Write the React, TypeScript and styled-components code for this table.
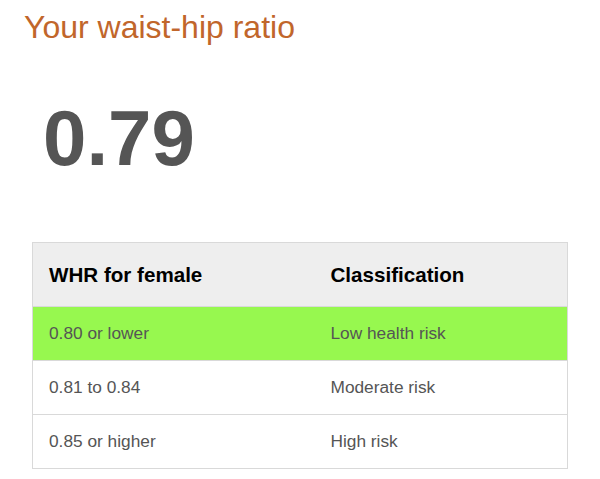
import React from 'react';
import styled, { createGlobalStyle } from 'styled-components';

const GlobalStyle = createGlobalStyle`
  body {
    margin: 0;
    background: #fff;
    font-family: 'Liberation Sans', Arial, sans-serif;
  }
`;

const Page = styled.div`
  width: 600px;
  height: 479px;
  padding: 9px 0 0 24px;
  box-sizing: border-box;
  overflow: hidden;
`;

const Title = styled.h1`
  margin: 0;
  font-size: 32px;
  font-weight: 400;
  line-height: 37px;
  color: #c1662b;
`;

const Ratio = styled.div`
  margin: 47px 0 0 19px;
  font-size: 78px;
  font-weight: 700;
  line-height: 90px;
  color: #555;
`;

const Table = styled.table`
  margin: 59px 0 0 8px;
  width: 536px;
  border-collapse: collapse;
  border: 1px solid #d9d9d9;
`;

const HeadCell = styled.th<{ first?: boolean }>`
  width: ${(p) => (p.first ? '282px' : 'auto')};
  height: 64px;
  padding: 0 16px;
  box-sizing: border-box;
  text-align: left;
  font-size: 20.6px;
  font-weight: 700;
  color: #000;
  background: #eeeeee;
  border-bottom: 1px solid #d9d9d9;
`;

const Row = styled.tr<{ highlight?: boolean }>`
  background: ${(p) => (p.highlight ? '#97f84f' : '#fff')};
  border-bottom: 1px solid #d9d9d9;
`;

const Cell = styled.td`
  height: 54px;
  padding: 0 16px;
  box-sizing: border-box;
  font-size: 17.3px;
  color: #555;
`;

const rows = [
  { range: '0.80 or lower', label: 'Low health risk', highlight: true },
  { range: '0.81 to 0.84', label: 'Moderate risk', highlight: false },
  { range: '0.85 or higher', label: 'High risk', highlight: false },
];

const App: React.FC = () => {
  return (
    <Page>
      <GlobalStyle />
      <Title>Your waist-hip ratio</Title>
      <Ratio>0.79</Ratio>
      <Table>
        <thead>
          <tr>
            <HeadCell first>WHR for female</HeadCell>
            <HeadCell>Classification</HeadCell>
          </tr>
        </thead>
        <tbody>
          {rows.map((r) => (
            <Row key={r.range} highlight={r.highlight}>
              <Cell>{r.range}</Cell>
              <Cell>{r.label}</Cell>
            </Row>
          ))}
        </tbody>
      </Table>
    </Page>
  );
};

export default App;
